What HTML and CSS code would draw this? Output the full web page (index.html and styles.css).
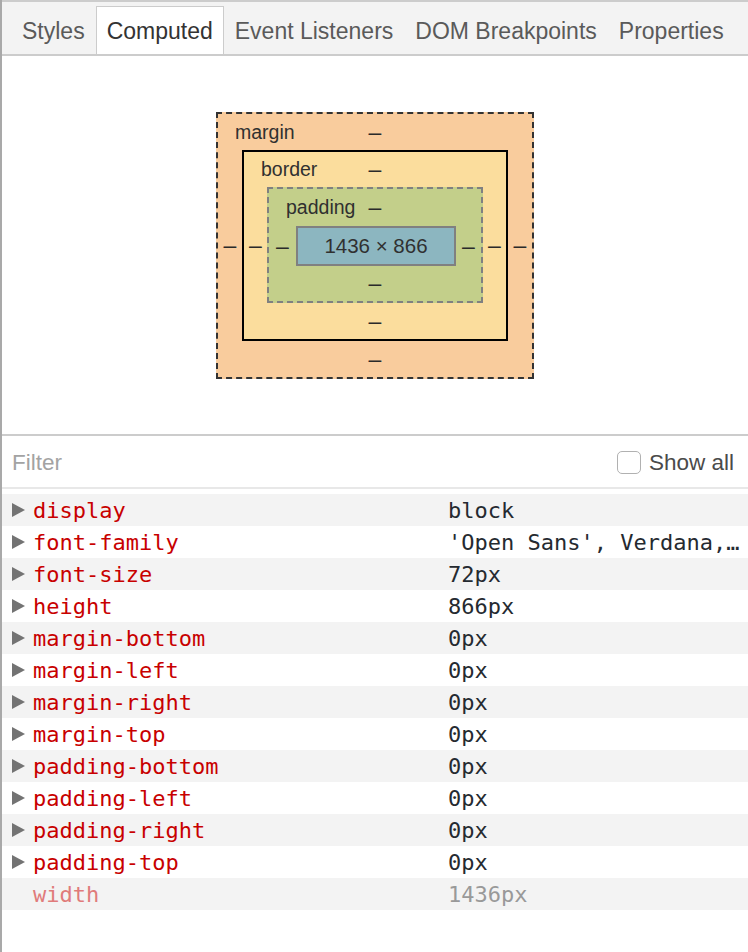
FILE: index.html
```html
<!DOCTYPE html>
<html>
<head>
<meta charset="utf-8">
<link rel="stylesheet" href="styles.css">
</head>
<body>
<div class="panel">
  <div class="tabs">
    <div class="tab">Styles</div>
    <div class="tab active">Computed</div>
    <div class="tab">Event Listeners</div>
    <div class="tab">DOM Breakpoints</div>
    <div class="tab">Properties</div>
  </div>

  <div class="diagram">
    <div class="bm bm-margin">
      <div class="bm-top"><span class="bm-label">margin</span><span class="dash">–</span><span></span></div>
      <div class="bm-side"><span class="dash">–</span></div>
      <div class="bm bm-border">
        <div class="bm-top"><span class="bm-label">border</span><span class="dash">–</span><span></span></div>
        <div class="bm-side"><span class="dash">–</span></div>
        <div class="bm bm-padding">
          <div class="bm-top"><span class="bm-label">padding</span><span class="dash">–</span><span></span></div>
          <div class="bm-side"><span class="dash">–</span></div>
          <div class="bm-content">1436 × 866</div>
          <div class="bm-side"><span class="dash">–</span></div>
          <div class="bm-bottom"><span class="dash">–</span></div>
        </div>
        <div class="bm-side"><span class="dash">–</span></div>
        <div class="bm-bottom"><span class="dash">–</span></div>
      </div>
      <div class="bm-side"><span class="dash">–</span></div>
      <div class="bm-bottom"><span class="dash">–</span></div>
    </div>
  </div>

  <div class="filter-bar">
    <span class="filter">Filter</span>
    <label class="showall"><span class="checkbox"></span><span>Show all</span></label>
  </div>

  <div class="props">
    <div class="row"><span class="tri"><svg width="13" height="14" viewBox="0 0 13 14"><polygon points="0,0 13,7 0,14" fill="#737373"/></svg></span><span class="name">display</span><span class="val">block</span></div>
    <div class="row"><span class="tri"><svg width="13" height="14" viewBox="0 0 13 14"><polygon points="0,0 13,7 0,14" fill="#737373"/></svg></span><span class="name">font-family</span><span class="val">'Open Sans', Verdana,…</span></div>
    <div class="row"><span class="tri"><svg width="13" height="14" viewBox="0 0 13 14"><polygon points="0,0 13,7 0,14" fill="#737373"/></svg></span><span class="name">font-size</span><span class="val">72px</span></div>
    <div class="row"><span class="tri"><svg width="13" height="14" viewBox="0 0 13 14"><polygon points="0,0 13,7 0,14" fill="#737373"/></svg></span><span class="name">height</span><span class="val">866px</span></div>
    <div class="row"><span class="tri"><svg width="13" height="14" viewBox="0 0 13 14"><polygon points="0,0 13,7 0,14" fill="#737373"/></svg></span><span class="name">margin-bottom</span><span class="val">0px</span></div>
    <div class="row"><span class="tri"><svg width="13" height="14" viewBox="0 0 13 14"><polygon points="0,0 13,7 0,14" fill="#737373"/></svg></span><span class="name">margin-left</span><span class="val">0px</span></div>
    <div class="row"><span class="tri"><svg width="13" height="14" viewBox="0 0 13 14"><polygon points="0,0 13,7 0,14" fill="#737373"/></svg></span><span class="name">margin-right</span><span class="val">0px</span></div>
    <div class="row"><span class="tri"><svg width="13" height="14" viewBox="0 0 13 14"><polygon points="0,0 13,7 0,14" fill="#737373"/></svg></span><span class="name">margin-top</span><span class="val">0px</span></div>
    <div class="row"><span class="tri"><svg width="13" height="14" viewBox="0 0 13 14"><polygon points="0,0 13,7 0,14" fill="#737373"/></svg></span><span class="name">padding-bottom</span><span class="val">0px</span></div>
    <div class="row"><span class="tri"><svg width="13" height="14" viewBox="0 0 13 14"><polygon points="0,0 13,7 0,14" fill="#737373"/></svg></span><span class="name">padding-left</span><span class="val">0px</span></div>
    <div class="row"><span class="tri"><svg width="13" height="14" viewBox="0 0 13 14"><polygon points="0,0 13,7 0,14" fill="#737373"/></svg></span><span class="name">padding-right</span><span class="val">0px</span></div>
    <div class="row"><span class="tri"><svg width="13" height="14" viewBox="0 0 13 14"><polygon points="0,0 13,7 0,14" fill="#737373"/></svg></span><span class="name">padding-top</span><span class="val">0px</span></div>
    <div class="row inherited"><span class="tri"></span><span class="name">width</span><span class="val">1436px</span></div>
  </div>
</div>
</body>
</html>
```

FILE: styles.css
```css
* { box-sizing: border-box; }

html, body {
  margin: 0;
  padding: 0;
  background: #ffffff;
}

.panel {
  border-left: 2px solid #a9a9a9;
  min-height: 952px;
  font-family: "Liberation Sans", Arial, sans-serif;
  color: #333333;
}

/* Tabs */
.tabs {
  display: flex;
  align-items: flex-end;
  height: 56px;
  padding-left: 9px;
  background: #f3f3f3;
  border-top: 2px solid #cccccc;
  border-bottom: 2px solid #cccccc;
}

.tab {
  height: 48px;
  line-height: 48px;
  padding: 0 10px;
  border: 1px solid transparent;
  border-bottom: none;
  font-size: 23px;
  color: #5a5a5a;
  white-space: nowrap;
}

.tab.active {
  background: #ffffff;
  border-color: #cccccc;
  color: #333333;
}

/* Box model diagram */
.diagram {
  display: flex;
  justify-content: center;
  padding: 56px 0 55px;
}

.bm {
  display: grid;
  font-size: 19.5px;
  color: #303030;
}

.bm-margin {
  grid-template-columns: 24px auto 24px;
  grid-template-rows: 36px auto 36px;
  background: #f9cc9d;
  border: 2px dashed #333333;
}

.bm-border {
  grid-template-columns: 23px auto 23px;
  grid-template-rows: 35px auto 36px;
  background: #fbdd9d;
  border: 2px solid #000000;
}

.bm-padding {
  grid-template-columns: 27px auto 25px;
  grid-template-rows: 37px auto 35px;
  background: #c3cf8a;
  border: 2px dashed #808080;
}

.bm-top {
  grid-column: 1 / -1;
  display: grid;
  grid-template-columns: 1fr auto 1fr;
  align-items: center;
}

.bm-label {
  padding-left: 17px;
  white-space: nowrap;
}

.bm-side,
.bm-bottom {
  display: flex;
  align-items: center;
  justify-content: center;
}

.bm-bottom {
  grid-column: 1 / -1;
}

.dash {
  font-size: 23px;
  line-height: 1;
  color: #2a2a2a;
}

.bm-content {
  width: 160px;
  height: 40px;
  display: flex;
  align-items: center;
  justify-content: center;
  background: #8cb6c0;
  border: 2px solid #808080;
  font-size: 20.5px;
  white-space: nowrap;
}

/* Filter bar */
.filter-bar {
  display: flex;
  align-items: center;
  justify-content: space-between;
  height: 55px;
  padding: 2px 14px 0 10px;
  border-top: 2px solid #cccccc;
  border-bottom: 2px solid #e8e8e8;
  font-size: 22.5px;
}

.filter {
  color: #a3a3a3;
}

.showall {
  display: flex;
  align-items: center;
  gap: 8px;
  color: #4a4a4a;
}

.checkbox {
  width: 24px;
  height: 23px;
  border: 1px solid #b1b1b1;
  border-radius: 5px;
  background: #ffffff;
}

/* Properties */
.props {
  padding-top: 5px;
}

.row {
  display: grid;
  grid-template-columns: 21px 415px 1fr;
  align-items: center;
  height: 32px;
  padding-left: 10px;
  font-family: "DejaVu Sans Mono", "Liberation Mono", monospace;
  font-size: 22px;
  white-space: nowrap;
}

.row:nth-child(odd) {
  background: #f3f3f3;
}

.tri {
  display: flex;
  align-items: center;
}

.name {
  color: #c80000;
}

.val {
  color: #252a30;
  overflow: hidden;
}

.inherited .name {
  color: #e07b7b;
}

.inherited .val {
  color: #999999;
}
```
